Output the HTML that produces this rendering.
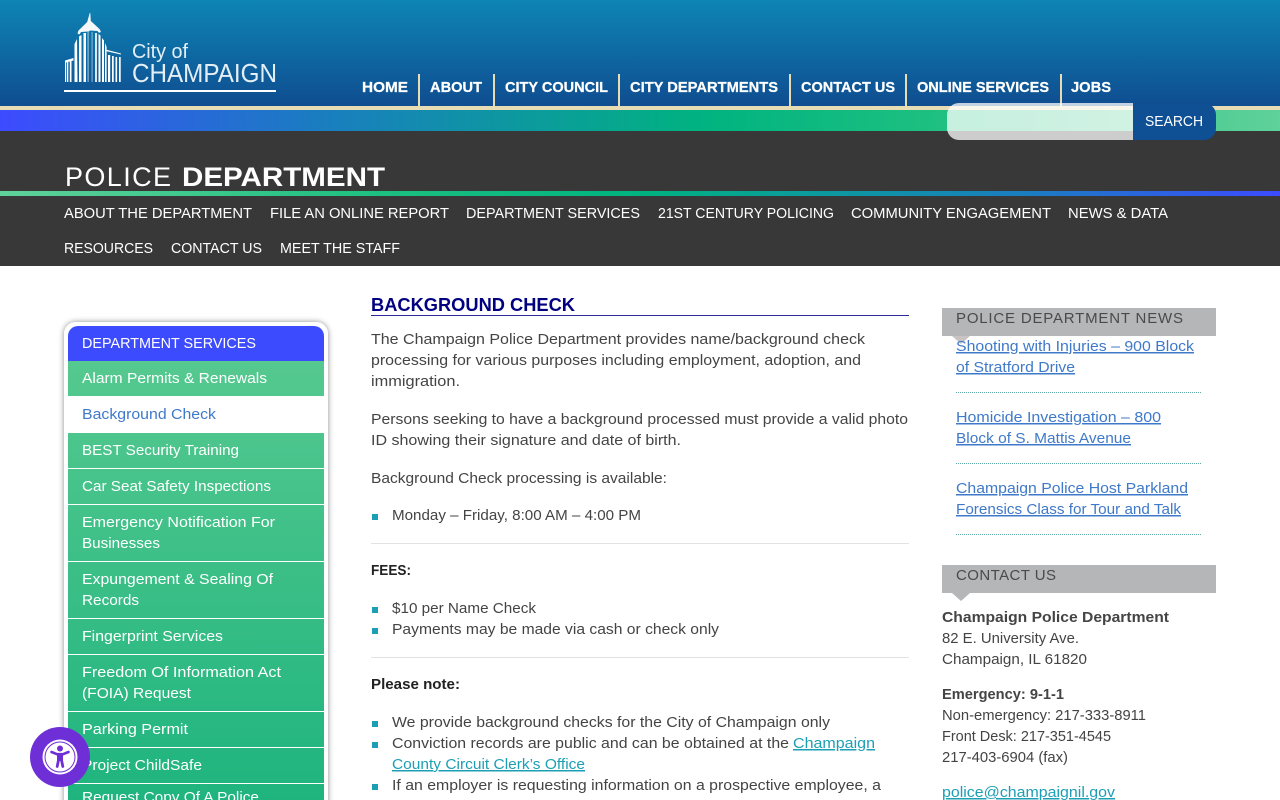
<!DOCTYPE html>
<html lang="en">
<head>
<meta charset="utf-8">
<title>Background Check - Police Department - City of Champaign</title>
<style>
html,body{margin:0;padding:0;width:1280px;height:800px;overflow:hidden;background:#fff}
svg{display:block}
text{font-family:"Liberation Sans",Arial,sans-serif;font-size:15px;fill:#444}
.w{fill:#fff}
.nb{fill:#fff;font-weight:700;font-size:15px;stroke:#fff;stroke-width:.25px}
.b{font-weight:700}
.d{fill:#222;font-weight:700}
.l{fill:#3f79c9;text-decoration:underline}
.t{fill:#1c9fb5;text-decoration:underline}
.h{fill:#4a4a4c;letter-spacing:0}
</style>
</head>
<body>
<svg width="1280" height="800" viewBox="0 0 1280 800" xmlns="http://www.w3.org/2000/svg">
<defs>
<linearGradient id="hd" x1="0" y1="0" x2="0" y2="1"><stop offset="0" stop-color="#0e85b5"/><stop offset="1" stop-color="#0f4d90"/></linearGradient>
<linearGradient id="bar" x1="0" y1="0" x2="1" y2="0"><stop offset="0" stop-color="#3d4bff"/><stop offset=".25" stop-color="#1a7dc0"/><stop offset=".55" stop-color="#00b380"/><stop offset=".72" stop-color="#1cbf80"/><stop offset="1" stop-color="#5fd19a"/></linearGradient>
<linearGradient id="bar2" x1="0" y1="0" x2="1" y2="0"><stop offset="0" stop-color="#5fd19a"/><stop offset=".3" stop-color="#1cbf80"/><stop offset=".5" stop-color="#00b380"/><stop offset=".8" stop-color="#1a7dc0"/><stop offset="1" stop-color="#3d4bff"/></linearGradient>
<linearGradient id="side" gradientUnits="userSpaceOnUse" x1="196" y1="361" x2="196" y2="800"><stop offset="0" stop-color="#55c98f"/><stop offset="1" stop-color="#1fb47e"/></linearGradient>
<filter id="sh" x="-10%" y="-10%" width="120%" height="120%"><feDropShadow dx="0" dy="0" stdDeviation="3" flood-color="#000" flood-opacity=".45"/></filter>
</defs>

<!-- header -->
<rect width="1280" height="106" fill="url(#hd)"/>
<rect y="106" width="1280" height="4" fill="#e8dcb5"/>
<rect y="110" width="1280" height="21" fill="url(#bar)"/>
<rect y="131" width="1280" height="135" fill="#383838"/>
<rect y="191" width="1280" height="5" fill="url(#bar2)"/>

<!-- logo -->
<g fill="#fff">
<path d="M89.700 13h.6l.5 8 8.700 8 1.500 3-2 .8-1.500-1.800-7.500-.5-1 1-8 .5-1.500 2.500-2-1 1-3 8.700-8.500z" fill="#f4f8fb"/>
<path d="M74.500 44l2.500-5 .5 43h-3z"/>
<path d="M79 36.500l2.500-1.500v47h-2.500z"/>
<path d="M83.500 33h2.500v49h-2.500z"/>
<path d="M87.500 32h1.200v50h-1.200z" opacity=".55"/>
<path d="M91.500 32h1.200v50h-1.200z" opacity=".45"/>
<path d="M95 33h2v49h-2z" opacity=".85"/>
<path d="M98.500 34l2 1.500v46.500h-2z"/>
<path d="M102 38l2 2.500v41.500h-2z"/>
<path d="M105 43l1.600 4v35h-1.600z"/>
<path d="M105.500 49.500l15.500 4-.2 1-15.300-3.500z"/>
<rect x="108" y="55" width="2.200" height="27"/><rect x="112" y="56" width="1.700" height="26"/><rect x="115.500" y="57" width="1.600" height="25"/><rect x="119" y="57" width="1.700" height="25"/>
<path d="M65 60.500l8.500-2.500v2.500l-2 .5v21h-1.700v-20.500l-1.500.4v20.100h-1.500v-19.800l-.8.2v19.600h-1z"/>
<rect x="64" y="90" width="212" height="2"/>
</g>
<text x="132" y="58" textLength="56" lengthAdjust="spacingAndGlyphs" style="font-size:20px;fill:#e4eef5">City of</text>
<text x="132" y="82" textLength="145" lengthAdjust="spacingAndGlyphs" style="font-size:26px;fill:#e4eef5">CHAMPAIGN</text>

<!-- top nav -->
<g fill="#e8dcb5">
<rect x="418" y="74" width="2" height="32"/><rect x="493" y="74" width="2" height="32"/><rect x="618" y="74" width="2" height="32"/><rect x="789" y="74" width="2" height="32"/><rect x="905" y="74" width="2" height="32"/><rect x="1060" y="74" width="2" height="32"/>
</g>
<text class="nb" x="362" y="92" textLength="46" lengthAdjust="spacingAndGlyphs">HOME</text>
<text class="nb" x="430" y="92" textLength="52" lengthAdjust="spacingAndGlyphs">ABOUT</text>
<text class="nb" x="505" y="92" textLength="103" lengthAdjust="spacingAndGlyphs">CITY COUNCIL</text>
<text class="nb" x="630" y="92" textLength="148" lengthAdjust="spacingAndGlyphs">CITY DEPARTMENTS</text>
<text class="nb" x="801" y="92" textLength="94" lengthAdjust="spacingAndGlyphs">CONTACT US</text>
<text class="nb" x="917" y="92" textLength="132" lengthAdjust="spacingAndGlyphs">ONLINE SERVICES</text>
<text class="nb" x="1071" y="92" textLength="40" lengthAdjust="spacingAndGlyphs">JOBS</text>

<!-- search -->
<path d="M1133 103H959a12 12 0 0 0-12 12v13a12 12 0 0 0 12 12h174z" fill="#fff" fill-opacity=".75"/>
<path d="M1133 103h71a12 12 0 0 1 12 12v13a12 12 0 0 1-12 12h-71z" fill="#0f4f93"/>
<text class="w" x="1145" y="126" textLength="58" lengthAdjust="spacingAndGlyphs">SEARCH</text>

<!-- department title -->
<text class="w" x="65" y="186" textLength="106" lengthAdjust="spacing" style="font-size:27px">POLICE</text>
<text class="w b" x="182" y="186" textLength="203" lengthAdjust="spacingAndGlyphs" style="font-size:27px">DEPARTMENT</text>

<!-- sub nav -->
<text class="w" x="64" y="218" textLength="188" lengthAdjust="spacingAndGlyphs">ABOUT THE DEPARTMENT</text>
<text class="w" x="270" y="218" textLength="179" lengthAdjust="spacingAndGlyphs">FILE AN ONLINE REPORT</text>
<text class="w" x="466" y="218" textLength="174" lengthAdjust="spacingAndGlyphs">DEPARTMENT SERVICES</text>
<text class="w" x="658" y="218" textLength="176" lengthAdjust="spacingAndGlyphs">21ST CENTURY POLICING</text>
<text class="w" x="851" y="218" textLength="200" lengthAdjust="spacingAndGlyphs">COMMUNITY ENGAGEMENT</text>
<text class="w" x="1068" y="218" textLength="100" lengthAdjust="spacingAndGlyphs">NEWS &amp; DATA</text>
<text class="w" x="64" y="253" textLength="89" lengthAdjust="spacingAndGlyphs">RESOURCES</text>
<text class="w" x="171" y="253" textLength="91" lengthAdjust="spacingAndGlyphs">CONTACT US</text>
<text class="w" x="280" y="253" textLength="120" lengthAdjust="spacingAndGlyphs">MEET THE STAFF</text>

<!-- sidebar -->
<rect x="64" y="322" width="264" height="520" rx="12" fill="#fff" filter="url(#sh)"/>
<rect x="68" y="361" width="256" height="439" fill="url(#side)"/>
<path d="M68 361v-25a10 10 0 0 1 10-10h236a10 10 0 0 1 10 10v25z" fill="#3d4bff"/>
<rect x="68" y="396" width="256" height="37" fill="#fff"/>
<g fill="#fff">
<rect x="68" y="468" width="256" height="1"/><rect x="68" y="504" width="256" height="1"/><rect x="68" y="561" width="256" height="1"/><rect x="68" y="618" width="256" height="1"/><rect x="68" y="654" width="256" height="1"/><rect x="68" y="711" width="256" height="1"/><rect x="68" y="747" width="256" height="1"/><rect x="68" y="783" width="256" height="1"/>
</g>
<text class="w" x="82" y="348" textLength="174" lengthAdjust="spacingAndGlyphs">DEPARTMENT SERVICES</text>
<text class="w" x="82" y="383" textLength="185" lengthAdjust="spacingAndGlyphs">Alarm Permits &amp; Renewals</text>
<text x="82" y="419" textLength="134" lengthAdjust="spacingAndGlyphs" style="fill:#3f79c9">Background Check</text>
<text class="w" x="82" y="455" textLength="157" lengthAdjust="spacingAndGlyphs">BEST Security Training</text>
<text class="w" x="82" y="491" textLength="189" lengthAdjust="spacingAndGlyphs">Car Seat Safety Inspections</text>
<text class="w" x="82" y="527" textLength="193" lengthAdjust="spacingAndGlyphs">Emergency Notification For</text>
<text class="w" x="82" y="548" textLength="78" lengthAdjust="spacingAndGlyphs">Businesses</text>
<text class="w" x="82" y="584" textLength="191" lengthAdjust="spacingAndGlyphs">Expungement &amp; Sealing Of</text>
<text class="w" x="82" y="605" textLength="57" lengthAdjust="spacingAndGlyphs">Records</text>
<text class="w" x="82" y="641" textLength="141" lengthAdjust="spacingAndGlyphs">Fingerprint Services</text>
<text class="w" x="82" y="677" textLength="199" lengthAdjust="spacingAndGlyphs">Freedom Of Information Act</text>
<text class="w" x="82" y="698" textLength="109" lengthAdjust="spacingAndGlyphs">(FOIA) Request</text>
<text class="w" x="82" y="734" textLength="106" lengthAdjust="spacingAndGlyphs">Parking Permit</text>
<text class="w" x="82" y="770" textLength="120" lengthAdjust="spacingAndGlyphs">Project ChildSafe</text>
<text class="w" x="82" y="802" textLength="177" lengthAdjust="spacingAndGlyphs">Request Copy Of A Police</text>

<!-- main -->
<text x="371" y="311" textLength="204" lengthAdjust="spacingAndGlyphs" style="font-size:18.500px;font-weight:700;fill:#000080">BACKGROUND CHECK</text>
<rect x="371" y="315" width="538" height="1" fill="#2b2b9a"/>
<text x="371" y="344" textLength="494" lengthAdjust="spacingAndGlyphs">The Champaign Police Department provides name/background check</text>
<text x="371" y="365" textLength="490" lengthAdjust="spacingAndGlyphs">processing for various purposes including employment, adoption, and</text>
<text x="371" y="386" textLength="89" lengthAdjust="spacingAndGlyphs">immigration.</text>
<text x="371" y="424" textLength="537" lengthAdjust="spacingAndGlyphs">Persons seeking to have a background processed must provide a valid photo</text>
<text x="371" y="445" textLength="310" lengthAdjust="spacingAndGlyphs">ID showing their signature and date of birth.</text>
<text x="371" y="483" textLength="296" lengthAdjust="spacingAndGlyphs">Background Check processing is available:</text>
<rect x="372" y="514" width="6" height="6" fill="#1c9fb5"/>
<text x="392" y="520" textLength="249" lengthAdjust="spacingAndGlyphs">Monday – Friday, 8:00 AM – 4:00 PM</text>
<rect x="371" y="543" width="538" height="1" fill="#e2e2e2"/>
<text class="d" x="371" y="575" textLength="40" lengthAdjust="spacingAndGlyphs">FEES:</text>
<rect x="372" y="607" width="6" height="6" fill="#1c9fb5"/>
<text x="392" y="613" textLength="144" lengthAdjust="spacingAndGlyphs">$10 per Name Check</text>
<rect x="372" y="628" width="6" height="6" fill="#1c9fb5"/>
<text x="392" y="634" textLength="327" lengthAdjust="spacingAndGlyphs">Payments may be made via cash or check only</text>
<rect x="371" y="657" width="538" height="1" fill="#e2e2e2"/>
<text class="d" x="371" y="689" textLength="89" lengthAdjust="spacingAndGlyphs">Please note:</text>
<rect x="372" y="721" width="6" height="6" fill="#1c9fb5"/>
<text x="392" y="727" textLength="438" lengthAdjust="spacingAndGlyphs">We provide background checks for the City of Champaign only</text>
<rect x="372" y="742" width="6" height="6" fill="#1c9fb5"/>
<text x="392" y="748" textLength="397" lengthAdjust="spacingAndGlyphs">Conviction records are public and can be obtained at the</text>
<text class="t" x="793" y="748" textLength="82" lengthAdjust="spacingAndGlyphs">Champaign</text>
<text class="t" x="392" y="769" textLength="193" lengthAdjust="spacingAndGlyphs">County Circuit Clerk’s Office</text>
<rect x="372" y="784" width="6" height="6" fill="#1c9fb5"/>
<text x="392" y="790" textLength="489" lengthAdjust="spacingAndGlyphs">If an employer is requesting information on a prospective employee, a</text>

<!-- right column -->
<rect x="942" y="308" width="274" height="28" fill="#b5b6b8"/>
<path d="M952 336h18l-9 8z" fill="#c9c4c4"/>
<text class="h" x="956" y="323" textLength="227" lengthAdjust="spacing">POLICE DEPARTMENT NEWS</text>
<text class="l" x="956" y="351" textLength="238" lengthAdjust="spacingAndGlyphs">Shooting with Injuries – 900 Block</text>
<text class="l" x="956" y="372" textLength="119" lengthAdjust="spacingAndGlyphs">of Stratford Drive</text>
<line x1="956" y1="392.500" x2="1202" y2="392.500" stroke="#5fa9a9" stroke-dasharray="1 1"/>
<text class="l" x="956" y="422" textLength="205" lengthAdjust="spacingAndGlyphs">Homicide Investigation – 800</text>
<text class="l" x="956" y="443" textLength="175" lengthAdjust="spacingAndGlyphs">Block of S. Mattis Avenue</text>
<line x1="956" y1="463.500" x2="1202" y2="463.500" stroke="#5fa9a9" stroke-dasharray="1 1"/>
<text class="l" x="956" y="493" textLength="232" lengthAdjust="spacingAndGlyphs">Champaign Police Host Parkland</text>
<text class="l" x="956" y="514" textLength="225" lengthAdjust="spacingAndGlyphs">Forensics Class for Tour and Talk</text>
<line x1="956" y1="534.500" x2="1202" y2="534.500" stroke="#5fa9a9" stroke-dasharray="1 1"/>

<rect x="942" y="565" width="274" height="28" fill="#b5b6b8"/>
<path d="M952 593h18l-9 8z" fill="#b5b6b8"/>
<text class="h" x="956" y="580" textLength="100" lengthAdjust="spacing">CONTACT US</text>
<text class="b" x="942" y="622" textLength="227" lengthAdjust="spacingAndGlyphs">Champaign Police Department</text>
<text x="942" y="643" textLength="137" lengthAdjust="spacingAndGlyphs">82 E. University Ave.</text>
<text x="942" y="664" textLength="145" lengthAdjust="spacingAndGlyphs">Champaign, IL 61820</text>
<text class="b" x="942" y="699" textLength="122" lengthAdjust="spacingAndGlyphs">Emergency: 9-1-1</text>
<text x="942" y="720" textLength="204" lengthAdjust="spacingAndGlyphs">Non-emergency: 217-333-8911</text>
<text x="942" y="741" textLength="169" lengthAdjust="spacingAndGlyphs">Front Desk: 217-351-4545</text>
<text x="942" y="762" textLength="126" lengthAdjust="spacingAndGlyphs">217-403-6904 (fax)</text>
<text class="t" x="942" y="797" textLength="173" lengthAdjust="spacingAndGlyphs">police@champaignil.gov</text>

<!-- accessibility widget -->
<circle cx="60" cy="757" r="30" fill="#6f2fd6"/>
<circle cx="60" cy="757" r="17.500" fill="#fff"/>
<circle cx="60" cy="757" r="15.500" fill="#6f2fd6"/>
<circle cx="60" cy="757" r="14.500" fill="#fff"/>
<circle cx="60" cy="748.500" r="3" fill="#6f2fd6"/>
<path d="M51.500 752l5.500 2.200h6l5.500-2.200" fill="none" stroke="#6f2fd6" stroke-width="2.600" stroke-linecap="round" stroke-linejoin="round"/>
<rect x="57" y="753" width="6" height="8" fill="#6f2fd6"/>
<path d="M58.500 760l-1.300 6.500M61.500 760l1.300 6.500" fill="none" stroke="#6f2fd6" stroke-width="2.800" stroke-linecap="round"/>
</svg>
</body>
</html>
